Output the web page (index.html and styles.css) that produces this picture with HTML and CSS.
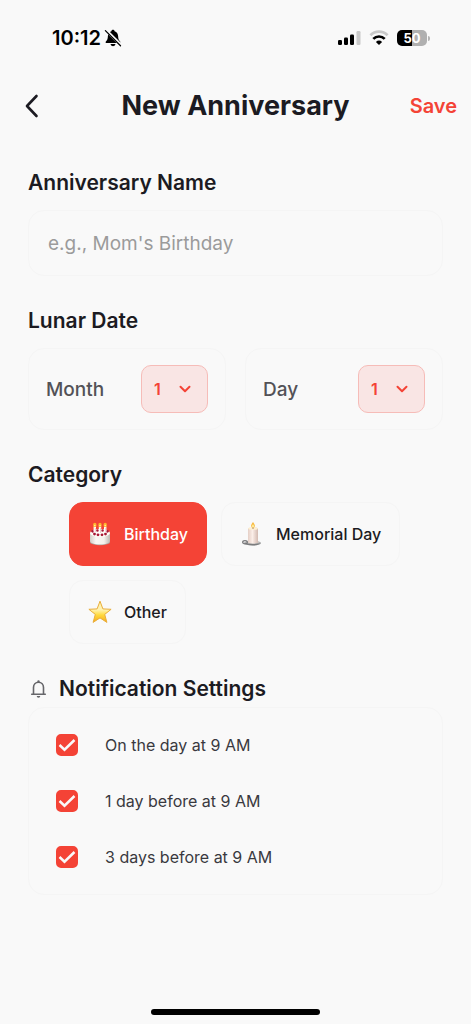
FILE: index.html
```html
<!DOCTYPE html>
<html lang="en">
<head>
<meta charset="utf-8">
<meta name="viewport" content="width=device-width, initial-scale=1">
<title>New Anniversary</title>
<link rel="stylesheet" href="styles.css">
</head>
<body class="app">
<div class="status-bar">
  <div class="status-group status-time">
    <span>10:12</span>
    <svg width="18" height="18" viewBox="0 0 18 18" aria-hidden="true">
      <path d="M9 .8c.9 0 1.500.6 1.600 1.400 2.200.7 3.400 2.500 3.500 4.800.1 3 .8 4.200 2 5.500.6.7.3 1.600-.7 1.600H2.600c-1 0-1.300-.9-.7-1.600C3.100 11.200 3.800 10 3.900 7c.1-2.300 1.300-4.100 3.500-4.800C7.500 1.400 8.100.8 9 .8Z" fill="#000"/>
      <path d="M6.500 15.100h5a2.500 2.100 0 0 1-5 0Z" fill="#000"/>
      <path d="M1.800 1 17 16.200" stroke="#f9f9f9" stroke-width="3"/>
      <path d="M1.400 1.600 16.500 16.700" stroke="#000" stroke-width="1.300" stroke-linecap="round"/>
    </svg>
  </div>
  <div class="status-group status-icons">
    <svg width="24" height="16" viewBox="0 0 24 16" aria-hidden="true">
      <rect x="1" y="10" width="4" height="5" rx="1.200"/>
      <rect x="7" y="7.500" width="4" height="7.500" rx="1.200"/>
      <rect x="13" y="4.500" width="4" height="10.500" rx="1.200"/>
      <rect x="19.500" y="1" width="4" height="14" rx="1.200" fill="#c9c9c9"/>
    </svg>
    <svg width="20" height="16" viewBox="0 0 20 16" aria-hidden="true">
      <path d="M1.400 5.200a12.300 12.300 0 0 1 17.200 0" fill="none" stroke="#c9c9c9" stroke-width="2.700"/>
      <path d="M4.300 8.900a8 8 0 0 1 11.400 0" fill="none" stroke="#000" stroke-width="2.700"/>
      <path d="M10 15 6.900 11.900a4.500 4.500 0 0 1 6.200 0Z"/>
    </svg>
    <span class="battery"><span class="battery-level">50</span></span>
  </div>
</div>

<header class="top-bar">
  <button class="back-button" type="button" aria-label="Back">
    <svg width="24" height="24" viewBox="0 0 24 24" aria-hidden="true"><path d="M17.500 2 8 12l9.500 10" fill="none" stroke="currentColor" stroke-width="2.600" stroke-linecap="round" stroke-linejoin="round"/></svg>
  </button>
  <h1 class="title">New Anniversary</h1>
  <button class="save-button" type="button">Save</button>
</header>

<main class="form">
  <section class="section">
    <h2 class="section-title"><label for="name">Anniversary Name</label></h2>
    <input class="text-field" id="name" type="text" placeholder="e.g., Mom's Birthday">
  </section>

  <section class="section">
    <h2 class="section-title">Lunar Date</h2>
    <div class="date-row">
      <div class="date-card">
        <label for="month">Month</label>
        <span class="picker">
          <select id="month"><option>1</option><option>2</option><option>3</option></select>
          <svg width="12" height="8" viewBox="0 0 12 8" aria-hidden="true"><path d="M1.500 1.800 6 6.200l4.500-4.400"/></svg>
        </span>
      </div>
      <div class="date-card">
        <label for="day">Day</label>
        <span class="picker">
          <select id="day"><option>1</option><option>2</option><option>3</option></select>
          <svg width="12" height="8" viewBox="0 0 12 8" aria-hidden="true"><path d="M1.500 1.800 6 6.200l4.500-4.400"/></svg>
        </span>
      </div>
    </div>
  </section>

  <section class="section">
    <h2 class="section-title">Category</h2>
    <div class="chips">
      <button class="chip chip-selected" type="button" aria-pressed="true">
        <svg width="24" height="24" viewBox="0 0 24 24" aria-hidden="true">
          <defs><linearGradient id="cake"><stop stop-color="#d2cdc6"/><stop offset=".3" stop-color="#faf8f4"/><stop offset=".7" stop-color="#f4f1ec"/><stop offset="1" stop-color="#bdb8b2"/></linearGradient></defs>
          <ellipse cx="12" cy="20.200" rx="10" ry="3" fill="#a9a39c"/>
          <path d="M2 11v8c0 2 4.500 3.500 10 3.500s10-1.500 10-3.500v-8Z" fill="url(#cake)"/>
          <ellipse cx="12" cy="11" rx="10" ry="4" fill="#fffdf8"/>
          <g fill="#a81835"><circle cx="4.700" cy="9.300" r="1.400"/><circle cx="6.500" cy="12" r="1.400"/><circle cx="10" cy="12.800" r="1.400"/><circle cx="14" cy="12.800" r="1.400"/><circle cx="17.500" cy="12" r="1.400"/><circle cx="19.400" cy="9.300" r="1.400"/><circle cx="9.500" cy="8.500" r="1.300"/><circle cx="14.500" cy="8.500" r="1.300"/></g>
          <path d="M6.800 4.500v6M12 4.500v7M17.200 4.500v6" stroke="#fff" stroke-width="2.400"/>
          <path d="M7.300 6v4M12.500 6v5M17.700 6v4" stroke="#e3b9b5" stroke-width=".7"/>
          <g fill="#ffb52e"><ellipse cx="6.800" cy="3" rx="1.700" ry="2.300"/><ellipse cx="12" cy="3" rx="1.700" ry="2.300"/><ellipse cx="17.200" cy="3" rx="1.700" ry="2.300"/></g>
          <g fill="#fff09a"><circle cx="6.800" cy="3.600" r=".8"/><circle cx="12" cy="3.600" r=".8"/><circle cx="17.200" cy="3.600" r=".8"/></g>
        </svg>
        <span>Birthday</span>
      </button>
      <button class="chip" type="button" aria-pressed="false">
        <svg width="24" height="24" viewBox="0 0 24 24" aria-hidden="true">
          <defs>
            <linearGradient id="wax"><stop stop-color="#e5cfc6"/><stop offset=".45" stop-color="#fbeee8"/><stop offset="1" stop-color="#d2b9b0"/></linearGradient>
            <linearGradient id="plate" x2="0" y2="1"><stop stop-color="#e5e5e5"/><stop offset="1" stop-color="#5f6062"/></linearGradient>
          </defs>
          <ellipse cx="12.500" cy="21" rx="8.500" ry="2.600" fill="url(#plate)"/>
          <ellipse cx="12.500" cy="20.300" rx="6.800" ry="1.500" fill="#c9c6c4"/>
          <ellipse cx="5" cy="20.200" rx="2.300" ry="1.600" fill="none" stroke="#77787a" stroke-width="1.300"/>
          <path d="M8 6.500c0-1.500 10-1.500 10 0v13.800c0 1.500-10 1.500-10 0Z" fill="url(#wax)"/>
          <ellipse cx="13" cy="6.500" rx="4.800" ry="1.300" fill="#fff0cf"/>
          <path d="M13 4.500V7" stroke="#8d6952" stroke-width=".8"/>
          <path d="M13 0c1 1.500 1.900 2.600 1.900 3.800a1.900 1.900 0 0 1-3.800 0C11.100 2.600 12 1.500 13 0Z" fill="#f9ba3f"/>
          <path d="M13 2.200c.5.800 1 1.300 1 2a1 1 0 0 1-2 0c0-.7.500-1.200 1-2Z" fill="#fff2a5"/>
        </svg>
        <span>Memorial Day</span>
      </button>
      <button class="chip" type="button" aria-pressed="false">
        <svg width="24" height="24" viewBox="0 0 24 24" aria-hidden="true">
          <defs><linearGradient id="star" x2="0" y2="1"><stop stop-color="#fff1a6"/><stop offset=".4" stop-color="#fff3b3"/><stop offset=".65" stop-color="#ffda3d"/><stop offset="1" stop-color="#f6a91c"/></linearGradient></defs>
          <path d="M12 1.200 14.900 8.900l8.200.4-6.400 5.100 2.200 8-6.900-4.500-6.900 4.500 2.200-8L.9 9.300l8.200-.4Z" fill="url(#star)" stroke="#e9ae3c" stroke-width="1" stroke-linejoin="round"/>
        </svg>
        <span>Other</span>
      </button>
    </div>
  </section>

  <section class="section section-notify">
    <h2 class="section-title title-with-icon">
      <svg width="20" height="20" viewBox="0 0 20 20" aria-hidden="true">
        <path d="M3.700 15.200h13.600M5.500 15V8.600c0-3 2-5.300 5-5.300s5 2.300 5 5.300V15" fill="none" stroke="#66666a" stroke-width="1.600" stroke-linecap="round"/>
        <path d="M9.300 3.200V2.500a1.200 1.200 0 0 1 2.400 0v.7ZM8.700 17h3.600a1.800 1.700 0 0 1-3.600 0Z" fill="#66666a"/>
      </svg>
      <span>Notification Settings</span>
    </h2>
    <div class="panel">
      <label class="option"><span class="check"><input type="checkbox" checked><svg viewBox="0 0 22 22" aria-hidden="true"><path d="m3.500 11 5 4.700L18.500 6"/></svg></span><span>On the day at 9 AM</span></label>
      <label class="option"><span class="check"><input type="checkbox" checked><svg viewBox="0 0 22 22" aria-hidden="true"><path d="m3.500 11 5 4.700L18.500 6"/></svg></span><span>1 day before at 9 AM</span></label>
      <label class="option"><span class="check"><input type="checkbox" checked><svg viewBox="0 0 22 22" aria-hidden="true"><path d="m3.500 11 5 4.700L18.500 6"/></svg></span><span>3 days before at 9 AM</span></label>
    </div>
  </section>
</main>
<div class="home-indicator"></div>
</body>
</html>
```
FILE: styles.css
```css
* {
  box-sizing: border-box;
}

.app {
  margin: 0;
  min-height: 100vh;
  display: flex;
  flex-direction: column;
  background: #f9f9f9;
  color: #1c1b22;
  font-family: Inter, "Liberation Sans", sans-serif;
}

button,
input,
select {
  font: inherit;
  color: inherit;
}

button {
  border: 0;
  background: none;
  padding: 0;
}

svg {
  display: block;
  flex: none;
}

.status-bar {
  display: flex;
  justify-content: space-between;
  align-items: center;
  height: 76px;
  padding: 0 41px 0 52px;
  color: #000;
}

.status-group {
  display: flex;
  align-items: center;
}

.status-time {
  gap: 3px;
  font-size: 20px;
  font-weight: 600;
}

.status-icons {
  gap: 8px;
}

.battery {
  display: flex;
  align-items: center;
  gap: 1px;
}

.battery::after {
  content: "";
  width: 2px;
  height: 5px;
  border-radius: 0 2px 2px 0;
  background: #b4b4b4;
}

.battery-level {
  width: 30px;
  border-radius: 5px;
  background: linear-gradient(90deg, #000 50%, #b0b0b0 50%);
  color: #fff;
  font-size: 13px;
  font-weight: 700;
  line-height: 16px;
  text-align: center;
}

.top-bar {
  display: grid;
  grid-template-columns: 1fr auto 1fr;
  align-items: center;
  height: 60px;
  padding: 0 14px 0 14px;
}

.back-button {
  justify-self: start;
  padding-left: 5px;
}

.title {
  margin: 0;
  font-size: 27px;
  font-weight: 700;
  line-height: 36px;
}

.save-button {
  justify-self: end;
  color: #f44336;
  font-size: 20px;
  font-weight: 600;
}

.form {
  flex: 1;
  display: flex;
  flex-direction: column;
  gap: 31px;
  padding: 33px 28px;
}

.section {
  display: flex;
  flex-direction: column;
  gap: 13px;
}

.section-notify {
  gap: 4px;
}

.section-title {
  margin: 0;
  font-size: 21px;
  font-weight: 600;
  line-height: 28px;
}

.title-with-icon {
  display: flex;
  align-items: center;
  gap: 11px;
}

.text-field {
  width: 100%;
  height: 66px;
  padding: 0 19px;
  border: 1px solid #f5f5f5;
  border-radius: 16px;
  background: transparent;
  font-size: 19px;
  outline: 0;
}

.text-field::placeholder {
  color: #9b9b9b;
  opacity: 1;
}

.date-row {
  display: grid;
  grid-template-columns: 1fr 1fr;
  gap: 19px;
}

.date-card {
  display: flex;
  align-items: center;
  justify-content: space-between;
  padding: 16px 17px;
  border: 1px solid #f5f5f5;
  border-radius: 16px;
  color: #535257;
  font-size: 19px;
  font-weight: 500;
}

.picker {
  display: grid;
  align-items: center;
  color: #f44336;
}

.picker select,
.picker svg {
  grid-area: 1 / 1;
}

.picker select {
  appearance: none;
  width: 67px;
  height: 48px;
  padding: 0 12px;
  border: 1px solid #f6bcb8;
  border-radius: 10px;
  background: #f9e5e4;
  font-size: 16px;
  font-weight: 600;
}

.picker svg {
  justify-self: end;
  margin-right: 17px;
  fill: none;
  stroke: currentColor;
  stroke-width: 2;
  stroke-linecap: round;
  stroke-linejoin: round;
  pointer-events: none;
}

.chips {
  display: flex;
  flex-wrap: wrap;
  gap: 14px;
  padding: 0 41px;
}

.chip {
  display: flex;
  align-items: center;
  gap: 12px;
  height: 64px;
  padding: 0 18px;
  border: 1px solid #f5f5f5;
  border-radius: 14px;
  font-size: 16px;
  font-weight: 500;
}

.chip-selected {
  border-color: #f44336;
  background: #f44336;
  color: #fff;
}

.panel {
  display: flex;
  flex-direction: column;
  padding: 9px 27px;
  border: 1px solid #f5f5f5;
  border-radius: 16px;
}

.option {
  display: flex;
  align-items: center;
  gap: 27px;
  height: 56px;
  color: #3a393f;
  font-size: 16px;
}

.check {
  display: grid;
}

.check input,
.check svg {
  grid-area: 1 / 1;
  width: 22px;
  height: 22px;
  margin: 0;
}

.check input {
  appearance: none;
  border: 2px solid #f44336;
  border-radius: 5px;
}

.check input:checked {
  background: #f44336;
}

.check svg {
  fill: none;
  stroke: #f9f9f9;
  stroke-width: 2.5;
  pointer-events: none;
}

.home-indicator {
  align-self: center;
  width: 36%;
  height: 6px;
  margin-bottom: 9px;
  border-radius: 3px;
  background: #000;
}
```
